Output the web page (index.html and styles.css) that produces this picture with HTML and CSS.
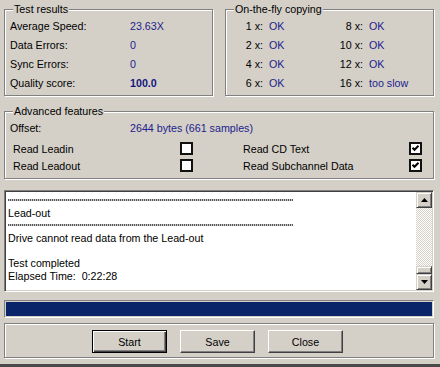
FILE: index.html
```html
<!DOCTYPE html>
<html>
<head>
<meta charset="utf-8">
<link rel="stylesheet" href="styles.css">
</head>
<body>
<div class="win">
  <div class="top">
    <div class="group results">
      <span class="legend">Test results</span>
      <div class="kv">
        <span>Average Speed:</span><span class="val">23.63X</span>
        <span>Data Errors:</span><span class="val">0</span>
        <span>Sync Errors:</span><span class="val">0</span>
        <span>Quality score:</span><span class="val bold">100.0</span>
      </div>
    </div>
    <div class="group fly">
      <span class="legend">On-the-fly copying</span>
      <div class="flygrid">
        <span class="lbl">1 x:</span><span class="val">OK</span><span class="lbl">8 x:</span><span class="val">OK</span>
        <span class="lbl">2 x:</span><span class="val">OK</span><span class="lbl">10 x:</span><span class="val">OK</span>
        <span class="lbl">4 x:</span><span class="val">OK</span><span class="lbl">12 x:</span><span class="val">OK</span>
        <span class="lbl">6 x:</span><span class="val">OK</span><span class="lbl">16 x:</span><span class="val">too slow</span>
      </div>
    </div>
  </div>

  <div class="group adv">
    <span class="legend">Advanced features</span>
    <div class="offset"><span class="olbl">Offset:</span><span class="val">2644 bytes (661 samples)</span></div>
    <div class="checks">
      <span>Read Leadin</span><span class="cb"></span>
      <span>Read CD Text</span><span class="cb"><svg width="9" height="9" viewBox="0 0 9 9"><polyline points="1.5,3.8 3.5,5.8 7.5,1.8" fill="none" stroke="#000" stroke-width="2"/></svg></span>
      <span>Read Leadout</span><span class="cb"></span>
      <span>Read Subchannel Data</span><span class="cb"><svg width="9" height="9" viewBox="0 0 9 9"><polyline points="1.5,3.8 3.5,5.8 7.5,1.8" fill="none" stroke="#000" stroke-width="2"/></svg></span>
    </div>
  </div>

  <div class="log">
    <div class="logtext">
      <div class="line"><div class="dots"></div></div>
      <div class="line">Lead-out</div>
      <div class="line"><div class="dots"></div></div>
      <div class="line">Drive cannot read data from the Lead-out</div>
      <div class="line"></div>
      <div class="line">Test completed</div>
      <div class="line">Elapsed Time:&nbsp; 0:22:28</div>
    </div>
    <div class="scroll">
      <div class="sbtn"><svg width="7" height="4" viewBox="0 0 7 4"><polygon points="3.5,0 7,4 0,4" fill="#000"/></svg></div>
      <div class="track"></div>
      <div class="thumb"></div>
      <div class="sbtn"><svg width="7" height="4" viewBox="0 0 7 4"><polygon points="0,0 7,0 3.5,4" fill="#000"/></svg></div>
    </div>
  </div>

  <div class="progress"><div class="fill"></div></div>

  <div class="group panel">
    <button class="btn default">Start</button>
    <button class="btn">Save</button>
    <button class="btn">Close</button>
  </div>
</div>
</body>
</html>
```

FILE: styles.css
```css
html, body {
  margin: 0;
  padding: 0;
  background: #d4d0c8;
}
body {
  width: 440px;
  height: 367px;
  overflow: hidden;
  font-family: "Liberation Sans", Arial, sans-serif;
  font-size: 10.7px;
  color: #000;
}
.win {
  box-sizing: border-box;
  height: 367px;
  padding: 9px 0 0 4px;
  border-bottom: 3px solid #4a4a4a;
}
.group {
  position: relative;
  box-sizing: border-box;
  border: 1px solid #808080;
  box-shadow: 1px 1px 0 #fff, inset 1px 1px 0 #fff;
}
.legend {
  position: absolute;
  top: -8px;
  left: 8px;
  padding: 0 1px;
  line-height: 14px;
  background: #d4d0c8;
  white-space: nowrap;
}
.val { color: #1c1c8c; }
.bold { font-weight: bold; color: #14147e; }

.top {
  display: flex;
  gap: 12px;
  width: 430px;
}
.results, .fly {
  width: 209px;
  height: 87px;
  padding-top: 6px;
}
.kv {
  display: grid;
  grid-template-columns: 120px auto;
  grid-auto-rows: 19px;
  align-items: center;
  padding-left: 5px;
}
.flygrid {
  display: grid;
  grid-template-columns: 37px 51px 37px auto;
  column-gap: 6px;
  grid-auto-rows: 19px;
  align-items: center;
}
.lbl { text-align: right; }

.adv {
  width: 430px;
  height: 68px;
  margin-top: 15px;
  padding-top: 8px;
}
.offset {
  display: flex;
  align-items: center;
  height: 16px;
  padding-left: 5px;
}
.olbl { width: 120px; }
.checks {
  margin-top: 4px;
  padding-left: 8px;
  display: grid;
  grid-template-columns: 167px 63px 166px 13px;
  grid-auto-rows: 17px;
  align-items: center;
}
.cb {
  box-sizing: border-box;
  width: 13px;
  height: 13px;
  border: 2px solid #111;
  background: #fff;
  display: flex;
  align-items: center;
  justify-content: center;
}
.cb svg { display: block; }

.log {
  box-sizing: border-box;
  width: 430px;
  height: 102px;
  margin-top: 11px;
  border: 1px solid;
  border-color: #808080 #fff #fff #808080;
  box-shadow: inset 1px 1px 0 #404040, inset -1px -1px 0 #d4d0c8;
  padding: 1px;
  background: #fff;
  display: flex;
}
.logtext {
  flex: 1;
  padding: 2px 0 0 2px;
  line-height: 12.6px;
  overflow: hidden;
}
.line {
  height: 12.6px;
  display: flex;
  align-items: center;
  white-space: nowrap;
}
.dots {
  width: 285px;
  height: 2px;
  background: repeating-linear-gradient(90deg, #555 0 1px, #c8c8c8 1px 2px);
}
.scroll {
  width: 16px;
  display: flex;
  flex-direction: column;
}
.sbtn, .thumb {
  box-sizing: border-box;
  width: 16px;
  background: #d4d0c8;
  border: 1px solid;
  border-color: #d4d0c8 #404040 #404040 #d4d0c8;
  box-shadow: inset 1px 1px 0 #fff, inset -1px -1px 0 #808080;
}
.sbtn {
  height: 16px;
  display: flex;
  align-items: center;
  justify-content: center;
}
.sbtn svg { display: block; }
.thumb { height: 8px; }
.track {
  flex: 1;
  background: repeating-conic-gradient(#fff 0 25%, #d4d0c8 0 50%) 0 0 / 2px 2px;
}

.progress {
  box-sizing: border-box;
  width: 430px;
  height: 18px;
  margin-top: 8px;
  border: 1px solid;
  border-color: #808080 #fff #fff #808080;
  padding: 1px;
}
.fill {
  height: 14px;
  background: #0a246a;
}

.panel {
  width: 430px;
  height: 35px;
  margin-top: 5px;
  padding: 6px 0 0 87px;
  display: flex;
  gap: 13px;
  align-items: flex-start;
}
.btn {
  box-sizing: border-box;
  width: 75px;
  height: 23px;
  margin: 0;
  padding: 0;
  font: inherit;
  color: #000;
  background: #d4d0c8;
  border: 1px solid;
  border-color: #fff #404040 #404040 #fff;
  box-shadow: inset -1px -1px 0 #808080;
}
.btn.default {
  border-color: #000;
  box-shadow: inset 1px 1px 0 #fff, inset -1px -1px 0 #404040, inset -2px -2px 0 #808080;
}
```
